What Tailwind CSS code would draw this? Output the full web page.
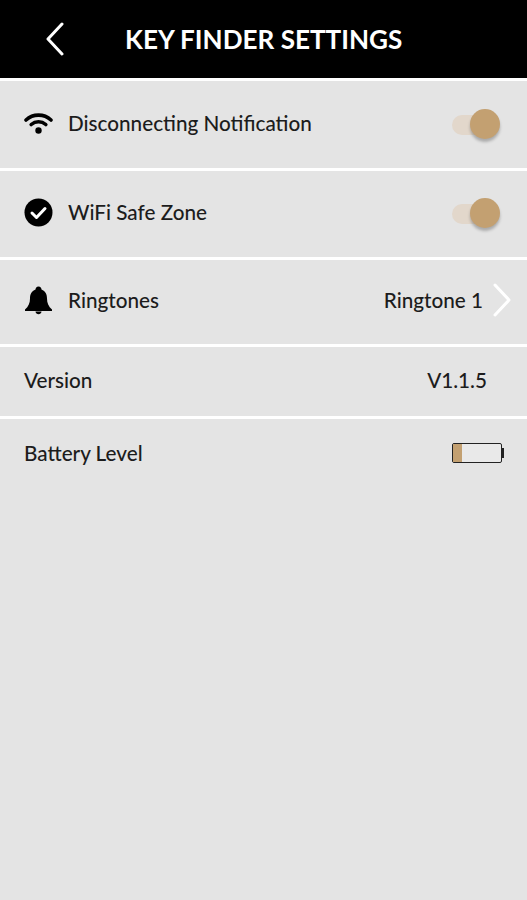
<!DOCTYPE html>
<html lang="en">
<head>
  <meta charset="UTF-8" />
  <meta name="viewport" content="width=device-width, initial-scale=1" />
  <title>Key Finder Settings</title>
  <script src="https://cdn.jsdelivr.net/npm/@tailwindcss/browser@4"></script>
</head>
<body class="bg-[#e4e4e4] h-[900px] overflow-hidden font-['Lato',sans-serif] text-[#1c1c1c]">
  <!-- Header -->
  <header class="bg-black h-[78px] flex items-center text-white">
    <svg class="w-[20px] h-[34px] ml-[45px]" viewBox="0 0 20 34" fill="none" stroke="#fff" stroke-width="3" stroke-linecap="round" stroke-linejoin="round">
      <path d="M17 2 L3 17 L17 32" />
    </svg>
    <h1 class="ml-[60px] mt-[1px] text-[26.1px] font-bold">KEY FINDER SETTINGS</h1>
  </header>

  <div class="h-[3px] bg-white"></div>

  <!-- Disconnecting Notification -->
  <div class="h-[87px] flex items-center pl-[24px] pr-[27px] pb-[4px]">
    <svg class="w-[29px] h-[22px]" viewBox="0 0 29 22" fill="none" stroke="#000" stroke-width="3.6" stroke-linecap="round">
      <path d="M2 8 C9 1.500 20 1.500 27 8" />
      <path d="M7.200 12.500 C11.500 8.800 17.500 8.800 21.800 12.500" />
      <circle cx="14.500" cy="18.500" r="3.200" fill="#000" stroke="none" />
    </svg>
    <span class="ml-[15px] mt-[3px] text-[20.7px] font-medium">Disconnecting Notification</span>
    <div class="ml-auto mt-[4px] relative w-[48px] h-[32px] flex items-center">
      <div class="w-[40px] h-[20px] rounded-full bg-[#e2d7cb]"></div>
      <div class="absolute right-0 top-0 w-[30px] h-[30px] rounded-full bg-[#c3a071] shadow-[0_3px_3px_rgba(0,0,0,0.25)]"></div>
    </div>
  </div>
  <div class="h-[3px] bg-white"></div>

  <!-- WiFi Safe Zone -->
  <div class="h-[86px] flex items-center pl-[24px] pr-[27px] pb-[4px]">
    <svg class="w-[29px] h-[29px]" viewBox="0 0 29 29">
      <circle cx="14.500" cy="14.500" r="14" fill="#000" />
      <path d="M8 15 L12.500 19.500 L21 10.500" fill="none" stroke="#fff" stroke-width="3" stroke-linecap="round" stroke-linejoin="round" />
    </svg>
    <span class="ml-[15px] mt-[1px] text-[20.7px] font-medium">WiFi Safe Zone</span>
    <div class="ml-auto mt-[4px] relative w-[48px] h-[32px] flex items-center">
      <div class="w-[40px] h-[20px] rounded-full bg-[#e2d7cb]"></div>
      <div class="absolute right-0 top-0 w-[30px] h-[30px] rounded-full bg-[#c3a071] shadow-[0_3px_3px_rgba(0,0,0,0.25)]"></div>
    </div>
  </div>
  <div class="h-[3px] bg-white"></div>

  <!-- Ringtones -->
  <div class="h-[84px] flex items-center pl-[24px] pr-[15px] pb-[4px]">
    <svg class="w-[29px] h-[29px]" viewBox="0 0 29 29" fill="#000">
      <path d="M14.500 0.500 C16.500 0.500 17.500 2 17.500 3.500 C21.500 5 23 8.500 23 12.500 C23 17 24.500 20.500 28 23.500 L28 25 L1 25 L1 23.500 C4.500 20.500 6 17 6 12.500 C6 8.500 7.500 5 11.500 3.500 C11.500 2 12.500 0.500 14.500 0.500 Z" />
      <path d="M11.500 25.500 C11.800 29 17.200 29 17.500 25.500 Z" />
    </svg>
    <span class="ml-[15px] mt-[1px] text-[20.7px] font-medium">Ringtones</span>
    <span class="ml-auto mt-[1px] text-[20.7px] font-medium">Ringtone 1</span>
    <svg class="ml-[9px] w-[20px] h-[34px]" viewBox="0 0 20 34" fill="none" stroke="#fff" stroke-width="3" stroke-linecap="round" stroke-linejoin="round">
      <path d="M3 2 L17 17 L3 32" />
    </svg>
  </div>
  <div class="h-[3px] bg-white"></div>

  <!-- Version -->
  <div class="h-[69px] flex items-center justify-between pl-[24px] pr-[40px] pb-[1px] text-[20.7px] font-medium">
    <span>Version</span>
    <span>V1.1.5</span>
  </div>
  <div class="h-[3px] bg-white"></div>

  <!-- Battery Level -->
  <div class="h-[72px] flex items-center justify-between pl-[24px] pr-[23px] pb-[4px] text-[20.7px] font-medium">
    <span class="mt-[1px]">Battery Level</span>
    <div class="flex items-center">
      <div class="w-[50px] h-[20px] border-[1.5px] border-[#222] bg-[#e9e9e9] rounded-[2px]">
        <div class="w-[9px] h-full bg-[#c3a071]"></div>
      </div>
      <div class="w-[2px] h-[10px] bg-[#222]"></div>
    </div>
  </div>
</body>
</html>
